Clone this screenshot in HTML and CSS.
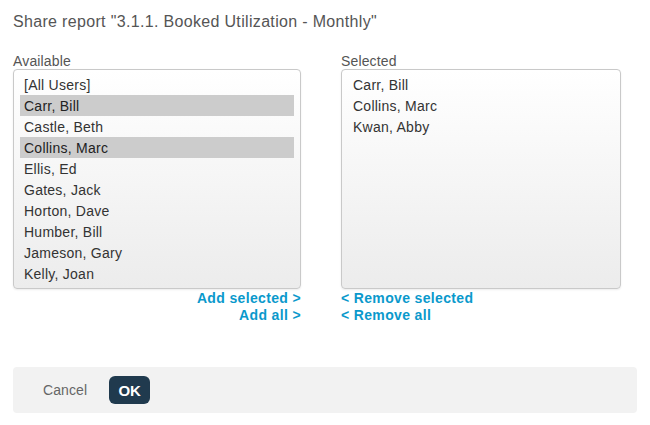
FILE: index.html
```html
<!DOCTYPE html>
<html>
<head>
<meta charset="utf-8">
<link rel="stylesheet" href="styles.css">
</head>
<body>
<div class="dialog">
  <h1 class="title">Share report "3.1.1. Booked Utilization - Monthly"</h1>
  <div class="lists">
    <div class="col">
      <div class="label">Available</div>
      <ul class="box">
        <li>[All Users]</li>
        <li class="sel">Carr, Bill</li>
        <li>Castle, Beth</li>
        <li class="sel">Collins, Marc</li>
        <li>Ellis, Ed</li>
        <li>Gates, Jack</li>
        <li>Horton, Dave</li>
        <li>Humber, Bill</li>
        <li>Jameson, Gary</li>
        <li>Kelly, Joan</li>
      </ul>
      <div class="links right">
        <a>Add selected &gt;</a>
        <a>Add all &gt;</a>
      </div>
    </div>
    <div class="col">
      <div class="label">Selected</div>
      <ul class="box wide">
        <li>Carr, Bill</li>
        <li>Collins, Marc</li>
        <li>Kwan, Abby</li>
      </ul>
      <div class="links">
        <a>&lt; Remove selected</a>
        <a>&lt; Remove all</a>
      </div>
    </div>
  </div>
  <div class="footer">
    <button class="cancel">Cancel</button>
    <button class="ok">OK</button>
  </div>
</div>
</body>
</html>
```

FILE: styles.css
```css
* { box-sizing: border-box; }
body {
  margin: 0;
  background: #fff;
  font-family: "Liberation Sans", Arial, sans-serif;
  color: #333;
}
.dialog {
  padding: 12px 13px 0 13px;
}
.title {
  margin: 0;
  font-size: 16px;
  font-weight: normal;
  line-height: 20px;
  letter-spacing: 0.33px;
  color: #555;
}
.lists {
  display: grid;
  grid-template-columns: 288px 280px;
  column-gap: 40px;
  margin-top: 22px;
}
.label {
  font-size: 14px;
  line-height: 15px;
  letter-spacing: 0.15px;
  color: #555;
}
.box {
  list-style: none;
  margin: 0;
  height: 220px;
  padding: 4px 6px;
  border: 1px solid #c9c9c9;
  border-radius: 4px;
  background: linear-gradient(#ffffff, #ececec);
  box-shadow: 0 1px 2px rgba(0,0,0,0.08);
  overflow: hidden;
}
.box li {
  font-size: 14px;
  line-height: 21px;
  padding-top: 1px;
  height: 21px;
  padding-left: 4px;
  letter-spacing: 0.25px;
  color: #333;
  white-space: nowrap;
}
.box li.sel {
  background: #cccccc;
  color: #222;
}
.box.wide {
  padding-left: 7px;
}
.links {
  display: flex;
  flex-direction: column;
  align-items: flex-start;
  margin-top: 1px;
}
.links.right {
  align-items: flex-end;
}
.links a {
  font-size: 14px;
  line-height: 17px;
  font-weight: bold;
  letter-spacing: 0.35px;
  color: #0a99cc;
  cursor: pointer;
}
.footer {
  margin-top: 43px;
  height: 46px;
  background: #f2f2f2;
  border-radius: 4px;
  display: flex;
  align-items: center;
  padding-left: 30px;
  gap: 22px;
}
.footer button {
  font-family: "Liberation Sans", Arial, sans-serif;
  font-size: 14px;
  border: 0;
  padding: 0;
}
.cancel {
  background: transparent;
  color: #666;
  letter-spacing: 0.1px;
}
.ok {
  width: 41px;
  height: 28px;
  background: #203a4e;
  color: #fff;
  font-size: 15px !important;
  font-weight: bold;
  border-radius: 6px;
}
```
